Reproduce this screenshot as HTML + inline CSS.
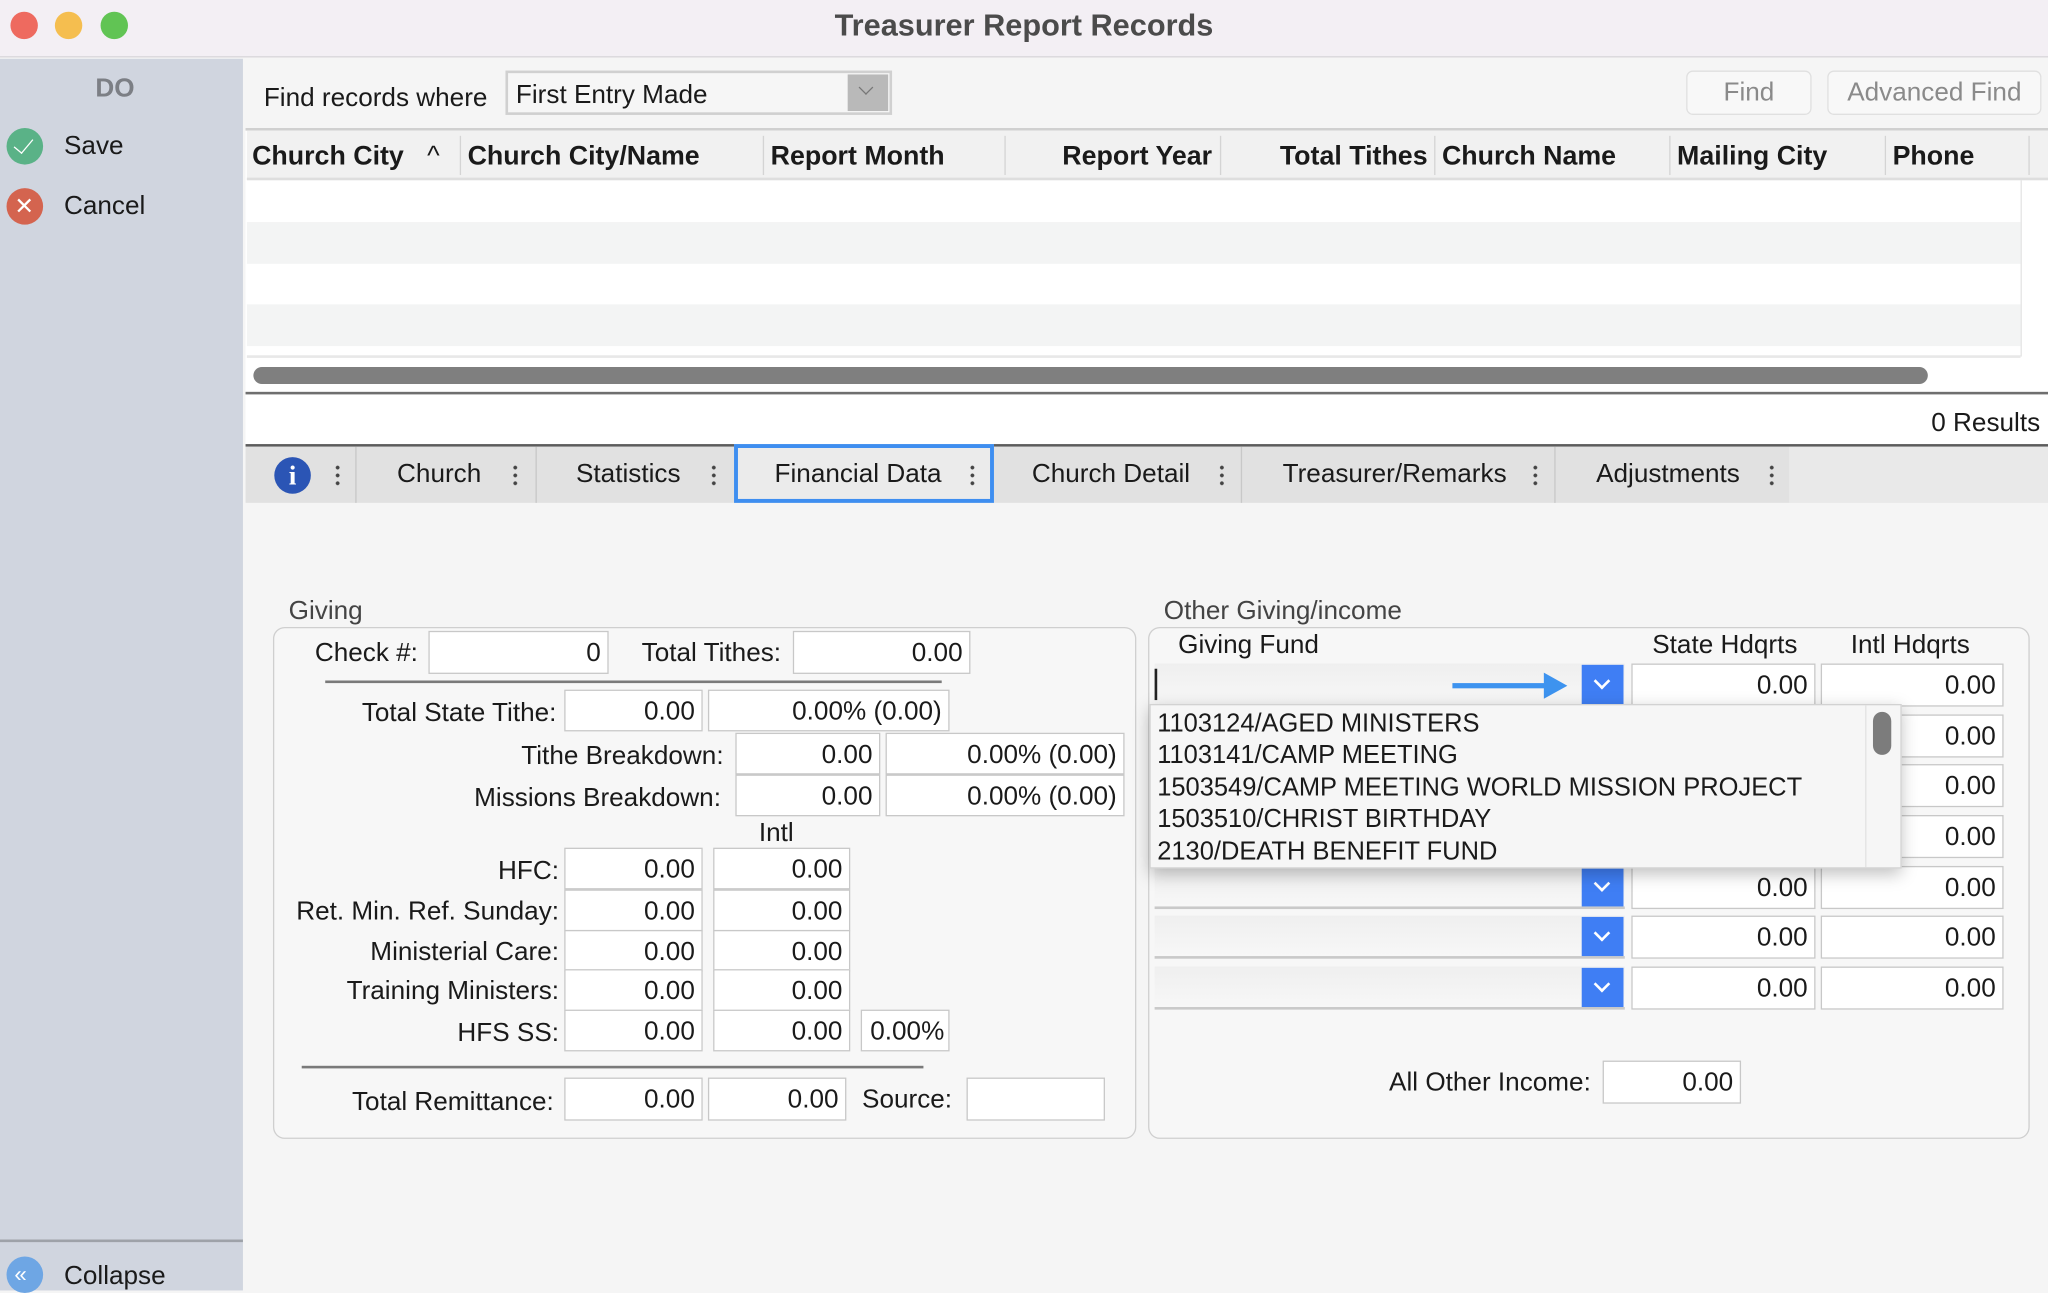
<!DOCTYPE html>
<html><head><meta charset="utf-8"><style>
*{box-sizing:border-box;margin:0;padding:0}
html,body{width:2048px;height:1290px;overflow:hidden;background:#f5f5f5}
#w{position:absolute;left:0;top:0;width:1568px;height:988px;transform:scale(1.30612);transform-origin:0 0;font-family:"Liberation Sans",sans-serif;font-size:20px;color:#1a1a1a;background:#f5f5f5}
.a{position:absolute;white-space:nowrap}
.t{position:absolute;white-space:nowrap;line-height:22px}
.r{text-align:right}
.in{position:absolute;background:#fff;border:1px solid #c8c8c8;text-align:right;padding-right:5px;line-height:32px;white-space:nowrap}
.hd{position:absolute;top:108px;font-weight:bold;font-size:20.5px;line-height:24px;white-space:nowrap}
.sep{position:absolute;top:104px;width:1px;height:30px;background:#d4d4d4}
.tab{position:absolute;top:351px;line-height:24px;white-space:nowrap}
.dots{position:absolute;top:355px;width:3px;height:18px;background:radial-gradient(circle,#444 1.3px,transparent 1.6px) 0 0/3px 6px repeat-y}
.tsep{position:absolute;top:342px;width:1px;height:43px;background:#c8c8c8}
.cb{position:absolute;left:884px;width:360px;height:33px;background:linear-gradient(#efefef,#f7f7f7);border-bottom:2px solid #c9c9c9}
.cbb{position:absolute;right:1px;top:1px;width:32px;height:30px;background:#3f7ef4}
.cbb:after{content:"";position:absolute;left:11px;top:8px;width:7px;height:7px;border-right:2px solid #fff;border-bottom:2px solid #fff;transform:rotate(45deg)}
.dd{font-size:19.5px}
</style></head><body><div id="w">
<div class="a" style="left:0;top:0;width:1568px;height:44px;background:#f3eff4;border-bottom:1px solid #d8d6da"></div>
<div class="a" style="left:8px;top:9px;width:21px;height:21px;border-radius:50%;background:#ee6a5f"></div>
<div class="a" style="left:42px;top:9px;width:21px;height:21px;border-radius:50%;background:#f5be4f"></div>
<div class="a" style="left:77px;top:9px;width:21px;height:21px;border-radius:50%;background:#61c454"></div>
<div class="t" style="left:0;width:1568px;text-align:center;top:6px;font-size:23.5px;font-weight:bold;color:#4b4b4b;line-height:26px">Treasurer Report Records</div>
<div class="a" style="left:0;top:45px;width:186px;height:943px;background:#d0d5df"></div>
<div class="t" style="left:0;width:176px;text-align:center;top:57px;font-weight:bold;color:#7c7f85">DO</div>
<div class="a" style="left:5px;top:98px;width:28px;height:28px;border-radius:50%;background:#5ab287"></div>
<div class="a" style="left:14px;top:103px;width:8px;height:14px;border-right:1.5px solid #fff;border-bottom:1.5px solid #fff;transform:rotate(40deg)"></div>
<div class="t" style="left:49px;top:101px">Save</div>
<div class="a" style="left:5px;top:144px;width:28px;height:28px;border-radius:50%;background:#d4644f"></div>
<div class="t" style="left:11px;top:147px;color:#fff;font-size:18px">✕</div>
<div class="t" style="left:49px;top:147px">Cancel</div>
<div class="a" style="left:0;top:949px;width:186px;height:2px;background:#9ea2a9"></div>
<div class="a" style="left:5px;top:962px;width:28px;height:28px;border-radius:50%;background:#6ea6e4"></div>
<div class="t" style="left:11px;top:965px;color:#fff;font-size:17px">«</div>
<div class="t" style="left:49px;top:966px">Collapse</div>
<div class="t" style="left:202px;top:64px">Find records where</div>
<div class="a" style="left:387px;top:54px;width:296px;height:34px;background:#f6f6f6;border:2px solid #d0d0d0"></div>
<div class="t" style="left:395px;top:62px">First Entry Made</div>
<div class="a" style="left:649px;top:57px;width:31px;height:28px;background:#b9b9b9"></div>
<div class="a" style="left:659px;top:63px;width:8px;height:8px;border-right:1.5px solid #777;border-bottom:1.5px solid #777;transform:rotate(45deg)"></div>
<div class="a" style="left:1291px;top:54px;width:96px;height:34px;background:#f8f8f8;border:1px solid #e0e0e0;border-radius:5px;text-align:center;line-height:32px;color:#8a8a8a">Find</div>
<div class="a" style="left:1399px;top:54px;width:164px;height:34px;background:#f8f8f8;border:1px solid #e0e0e0;border-radius:5px;text-align:center;line-height:32px;color:#8a8a8a">Advanced Find</div>
<div class="a" style="left:188px;top:98px;width:1380px;height:204px;background:#fff;border-top:2px solid #d0d0d0"></div>
<div class="a" style="left:189px;top:100px;width:1379px;height:38px;background:#f1f1f1;border-bottom:2px solid #dedede"></div>
<div class="hd" style="left:193px">Church City</div>
<div class="hd" style="left:327px;font-weight:normal">^</div>
<div class="sep" style="left:352px"></div>
<div class="hd" style="left:358px">Church City/Name</div>
<div class="sep" style="left:584px"></div>
<div class="hd" style="left:590px">Report Month</div>
<div class="sep" style="left:769px"></div>
<div class="hd r" style="left:770px;width:158px">Report Year</div>
<div class="sep" style="left:934px"></div>
<div class="hd r" style="left:935px;width:158px">Total Tithes</div>
<div class="sep" style="left:1098px"></div>
<div class="hd" style="left:1104px">Church Name</div>
<div class="sep" style="left:1278px"></div>
<div class="hd" style="left:1284px">Mailing City</div>
<div class="sep" style="left:1443px"></div>
<div class="hd" style="left:1449px">Phone</div>
<div class="sep" style="left:1553px"></div>
<div class="a" style="left:189px;top:170px;width:1358px;height:32px;background:#f3f4f4"></div>
<div class="a" style="left:189px;top:233px;width:1358px;height:32px;background:#f3f4f4"></div>
<div class="a" style="left:1547px;top:138px;width:1px;height:135px;background:#e4e4e4"></div>
<div class="a" style="left:189px;top:272px;width:1358px;height:2px;background:#e8e8e8"></div>
<div class="a" style="left:194px;top:281px;width:1282px;height:13px;border-radius:7px;background:#7f7f7f"></div>
<div class="a" style="left:188px;top:300px;width:1380px;height:2px;background:#6f6f6f"></div>
<div class="a" style="left:188px;top:302px;width:1380px;height:38px;background:#fff"></div>
<div class="t r" style="left:1300px;width:262px;top:313px">0 Results</div>
<div class="a" style="left:188px;top:340px;width:1380px;height:2px;background:#5c5c5c"></div>
<div class="a" style="left:188px;top:342px;width:1182px;height:43px;background:#e1e1e1"></div>
<div class="a" style="left:1370px;top:342px;width:198px;height:43px;background:#e9e9e9"></div>
<div class="a" style="left:210px;top:350px;width:28px;height:28px;border-radius:50%;background:#2b55b5;color:#fff;font-weight:bold;font-family:'Liberation Serif',serif;font-size:21px;text-align:center;line-height:29px">i</div>
<div class="dots" style="left:257px"></div>
<div class="tsep" style="left:272px"></div>
<div class="tab" style="left:304px">Church</div>
<div class="dots" style="left:393px"></div>
<div class="tsep" style="left:410px"></div>
<div class="tab" style="left:441px">Statistics</div>
<div class="dots" style="left:545px"></div>
<div class="a" style="left:562px;top:340px;width:199px;height:45px;background:#ebebeb;border:3px solid #3e8ef0"></div>
<div class="tab" style="left:593px">Financial Data</div>
<div class="dots" style="left:743px"></div>
<div class="tab" style="left:790px">Church Detail</div>
<div class="dots" style="left:934px"></div>
<div class="tsep" style="left:950px"></div>
<div class="tab" style="left:982px">Treasurer/Remarks</div>
<div class="dots" style="left:1174px"></div>
<div class="tsep" style="left:1190px"></div>
<div class="tab" style="left:1222px">Adjustments</div>
<div class="dots" style="left:1355px"></div>
<div class="t" style="left:221px;top:457px;color:#444">Giving</div>
<div class="a" style="left:209px;top:480px;width:661px;height:392px;border:1.5px solid #cfcfcf;border-radius:9px;background:#f7f7f7"></div>
<div class="t r" style="left:200px;width:120px;top:489px">Check #:</div>
<div class="in" style="left:328px;top:483px;width:138px;height:33px">0</div>
<div class="t r" style="left:450px;width:148px;top:489px">Total Tithes:</div>
<div class="in" style="left:607px;top:483px;width:136px;height:33px">0.00</div>
<div class="a" style="left:249px;top:521px;width:472px;height:2px;background:#7a7a7a"></div>
<div class="t r" style="left:200px;width:226px;top:535px">Total State Tithe:</div>
<div class="in" style="left:432px;top:528px;width:106px;height:32px">0.00</div>
<div class="in" style="left:542px;top:528px;width:185px;height:32px">0.00% (0.00)</div>
<div class="t r" style="left:300px;width:254px;top:568px">Tithe Breakdown:</div>
<div class="in" style="left:563px;top:561px;width:111px;height:32px">0.00</div>
<div class="in" style="left:678px;top:561px;width:183px;height:32px">0.00% (0.00)</div>
<div class="t r" style="left:300px;width:252px;top:600px">Missions Breakdown:</div>
<div class="in" style="left:563px;top:593px;width:111px;height:32px">0.00</div>
<div class="in" style="left:678px;top:593px;width:183px;height:32px">0.00% (0.00)</div>
<div class="t" style="left:581px;top:627px">Intl</div>
<div class="t r" style="left:200px;width:228px;top:656px">HFC:</div>
<div class="t r" style="left:200px;width:228px;top:687px">Ret. Min. Ref. Sunday:</div>
<div class="t r" style="left:200px;width:228px;top:718px">Ministerial Care:</div>
<div class="t r" style="left:200px;width:228px;top:748px">Training Ministers:</div>
<div class="t r" style="left:200px;width:228px;top:780px">HFS SS:</div>
<div class="in" style="left:432px;top:649px;width:106px;height:32px">0.00</div>
<div class="in" style="left:546px;top:649px;width:105px;height:32px">0.00</div>
<div class="in" style="left:432px;top:681px;width:106px;height:32px">0.00</div>
<div class="in" style="left:546px;top:681px;width:105px;height:32px">0.00</div>
<div class="in" style="left:432px;top:712px;width:106px;height:32px">0.00</div>
<div class="in" style="left:546px;top:712px;width:105px;height:32px">0.00</div>
<div class="in" style="left:432px;top:742px;width:106px;height:32px">0.00</div>
<div class="in" style="left:546px;top:742px;width:105px;height:32px">0.00</div>
<div class="in" style="left:432px;top:773px;width:106px;height:32px">0.00</div>
<div class="in" style="left:546px;top:773px;width:105px;height:32px">0.00</div>
<div class="in" style="left:659px;top:773px;width:68px;height:32px;padding-right:3px">0.00%</div>
<div class="a" style="left:231px;top:816px;width:476px;height:2px;background:#7a7a7a"></div>
<div class="t r" style="left:200px;width:224px;top:833px">Total Remittance:</div>
<div class="in" style="left:432px;top:825px;width:106px;height:33px">0.00</div>
<div class="in" style="left:542px;top:825px;width:106px;height:33px">0.00</div>
<div class="t" style="left:660px;top:831px">Source:</div>
<div class="in" style="left:740px;top:825px;width:106px;height:33px"></div>
<div class="t" style="left:891px;top:457px;color:#444">Other Giving/income</div>
<div class="a" style="left:879px;top:480px;width:675px;height:392px;border:1.5px solid #cfcfcf;border-radius:9px;background:#f7f7f7"></div>
<div class="t" style="left:902px;top:483px">Giving Fund</div>
<div class="t" style="left:1265px;top:483px">State Hdqrts</div>
<div class="t" style="left:1417px;top:483px">Intl Hdqrts</div>
<div class="cb" style="top:508px"><div class="cbb"></div></div>
<div class="a" style="left:884px;top:512px;width:1.5px;height:24px;background:#222"></div>
<div class="a" style="left:1112px;top:523px;width:72px;height:4px;background:#3d93ef"></div>
<div class="a" style="left:1182px;top:515px;width:0;height:0;border-left:18px solid #3d93ef;border-top:10px solid transparent;border-bottom:10px solid transparent"></div>
<div class="in" style="left:1249px;top:508px;width:141px;height:33px">0.00</div>
<div class="in" style="left:1394px;top:508px;width:140px;height:33px">0.00</div>
<div class="in" style="left:1394px;top:547px;width:140px;height:33px">0.00</div>
<div class="in" style="left:1394px;top:585px;width:140px;height:33px">0.00</div>
<div class="in" style="left:1394px;top:624px;width:140px;height:33px">0.00</div>
<div class="cb" style="top:663px"><div class="cbb"></div></div>
<div class="in" style="left:1249px;top:663px;width:141px;height:33px">0.00</div>
<div class="in" style="left:1394px;top:663px;width:140px;height:33px">0.00</div>
<div class="cb" style="top:701px"><div class="cbb"></div></div>
<div class="in" style="left:1249px;top:701px;width:141px;height:33px">0.00</div>
<div class="in" style="left:1394px;top:701px;width:140px;height:33px">0.00</div>
<div class="cb" style="top:740px"><div class="cbb"></div></div>
<div class="in" style="left:1249px;top:740px;width:141px;height:33px">0.00</div>
<div class="in" style="left:1394px;top:740px;width:140px;height:33px">0.00</div>
<div class="a" style="left:880px;top:539px;width:576px;height:126px;background:#f6f6f6;border:1px solid #d2d2d2;box-shadow:0 4px 12px rgba(0,0,0,.25)"></div>
<div class="a" style="left:1428px;top:540px;width:1px;height:124px;background:#e2e2e2"></div>
<div class="a" style="left:1434px;top:545px;width:14px;height:33px;border-radius:7px;background:#7c7c7c"></div>
<div class="t dd" style="left:886px;top:543px">1103124/AGED MINISTERS</div>
<div class="t dd" style="left:886px;top:567px">1103141/CAMP MEETING</div>
<div class="t dd" style="left:886px;top:592px">1503549/CAMP MEETING WORLD MISSION PROJECT</div>
<div class="t dd" style="left:886px;top:616px">1503510/CHRIST BIRTHDAY</div>
<div class="t dd" style="left:886px;top:641px">2130/DEATH BENEFIT FUND</div>
<div class="t r" style="left:1000px;width:218px;top:818px">All Other Income:</div>
<div class="in" style="left:1227px;top:812px;width:106px;height:33px">0.00</div>
</div></body></html>
